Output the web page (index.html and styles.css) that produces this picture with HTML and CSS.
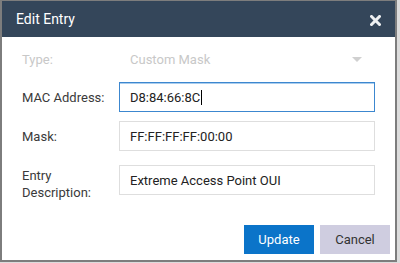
FILE: index.html
```html
<!DOCTYPE html>
<html lang="en">
<head>
    <meta charset="UTF-8">
    <title>Edit Entry</title>
    <link rel="stylesheet" href="styles.css">
</head>
<body>

    <div class="dialog">
        <div class="dialog-header">
            <h2>Edit Entry</h2>
            <button type="button" class="close-btn">
                <svg width="11" height="11" viewBox="0 0 11 11">
                    <path d="M1.5 1.5 L9.5 9.5 M9.5 1.5 L1.5 9.5" stroke="#eef0f2" stroke-width="3" stroke-linecap="square"/>
                </svg>
            </button>
        </div>

        <div class="dialog-body">
            <div class="row">
                <label class="field-label disabled">Type:</label>
                <div class="select-field">
                    <span>Custom Mask</span>
                    <span class="caret"></span>
                </div>
            </div>

            <div class="row">
                <label class="field-label">MAC Address:</label>
                <div class="input-field focused">D8:84:66:8C<span class="cursor"></span></div>
            </div>

            <div class="row">
                <label class="field-label">Mask:</label>
                <div class="input-field">FF:FF:FF:FF:00:00</div>
            </div>

            <div class="row top">
                <label class="field-label two-line">Entry<br>Description:</label>
                <div class="input-field">Extreme Access Point OUI</div>
            </div>
        </div>

        <div class="dialog-footer">
            <button type="button" class="btn btn-primary">Update</button>
            <button type="button" class="btn btn-secondary">Cancel</button>
        </div>
    </div>

</body>
</html>
```

FILE: styles.css
```css
* {
    margin: 0;
    padding: 0;
    box-sizing: border-box;
}

body {
    font-family: Roboto, 'Liberation Sans', sans-serif;
    background-color: #dcdcdc;
    width: 400px;
    height: 263px;
    overflow: hidden;
}

.dialog {
    width: 397px;
    height: 262px;
    background-color: #fff;
    border: 2px solid #7d7d7d;
    border-top-width: 1px;
    display: flex;
    flex-direction: column;
}

.dialog-header {
    background-color: #34465a;
    height: 36px;
    display: flex;
    align-items: center;
    justify-content: space-between;
    padding: 0 14px 0 14px;
}

.dialog-header h2 {
    color: #fff;
    font-size: 14px;
    font-weight: normal;
}

.close-btn {
    background: none;
    border: none;
    display: flex;
    margin-top: 2px;
}

.dialog-body {
    padding: 7px 0 0 20px;
    flex: 1;
}

.row {
    display: flex;
    align-items: center;
    height: 30px;
    margin-bottom: 8px;
}

.row:nth-child(2) {
    margin-bottom: 9px;
}

.row:nth-child(3) {
    margin-bottom: 14px;
}

.row.top {
    align-items: flex-start;
}

.field-label {
    width: 97px;
    font-size: 13px;
    color: #3a3a3a;
}

.field-label.disabled {
    color: #c8c8c8;
}

.field-label.two-line {
    line-height: 17px;
    padding-top: 2px;
}

.select-field {
    width: 256px;
    height: 30px;
    display: flex;
    align-items: center;
    justify-content: space-between;
    padding: 0 13px 0 11px;
    font-size: 13px;
    color: #c8c8c8;
}

.caret {
    width: 0;
    height: 0;
    border-left: 5px solid transparent;
    border-right: 5px solid transparent;
    border-top: 5px solid #d0d0d0;
}

.input-field {
    width: 256px;
    height: 30px;
    border: 1px solid #dedede;
    padding: 0 10px;
    display: flex;
    align-items: center;
    font-size: 13px;
    color: #222;
}

.input-field.focused {
    border-color: #3c87cf;
    box-shadow: inset 0 1px 0 #a9cdee;
}

.cursor {
    display: inline-block;
    width: 1px;
    height: 15px;
    background-color: #000;
    margin-left: 1px;
}

.dialog-footer {
    display: flex;
    justify-content: flex-end;
    gap: 6px;
    padding: 0 5px 6px 0;
}

.btn {
    width: 70px;
    height: 29px;
    border: none;
    font-family: Roboto, 'Liberation Sans', sans-serif;
    font-size: 13px;
}

.btn-primary {
    background-color: #0b74c9;
    color: #fff;
}

.btn-secondary {
    background-color: #cfcde0;
    color: #333;
}
```
